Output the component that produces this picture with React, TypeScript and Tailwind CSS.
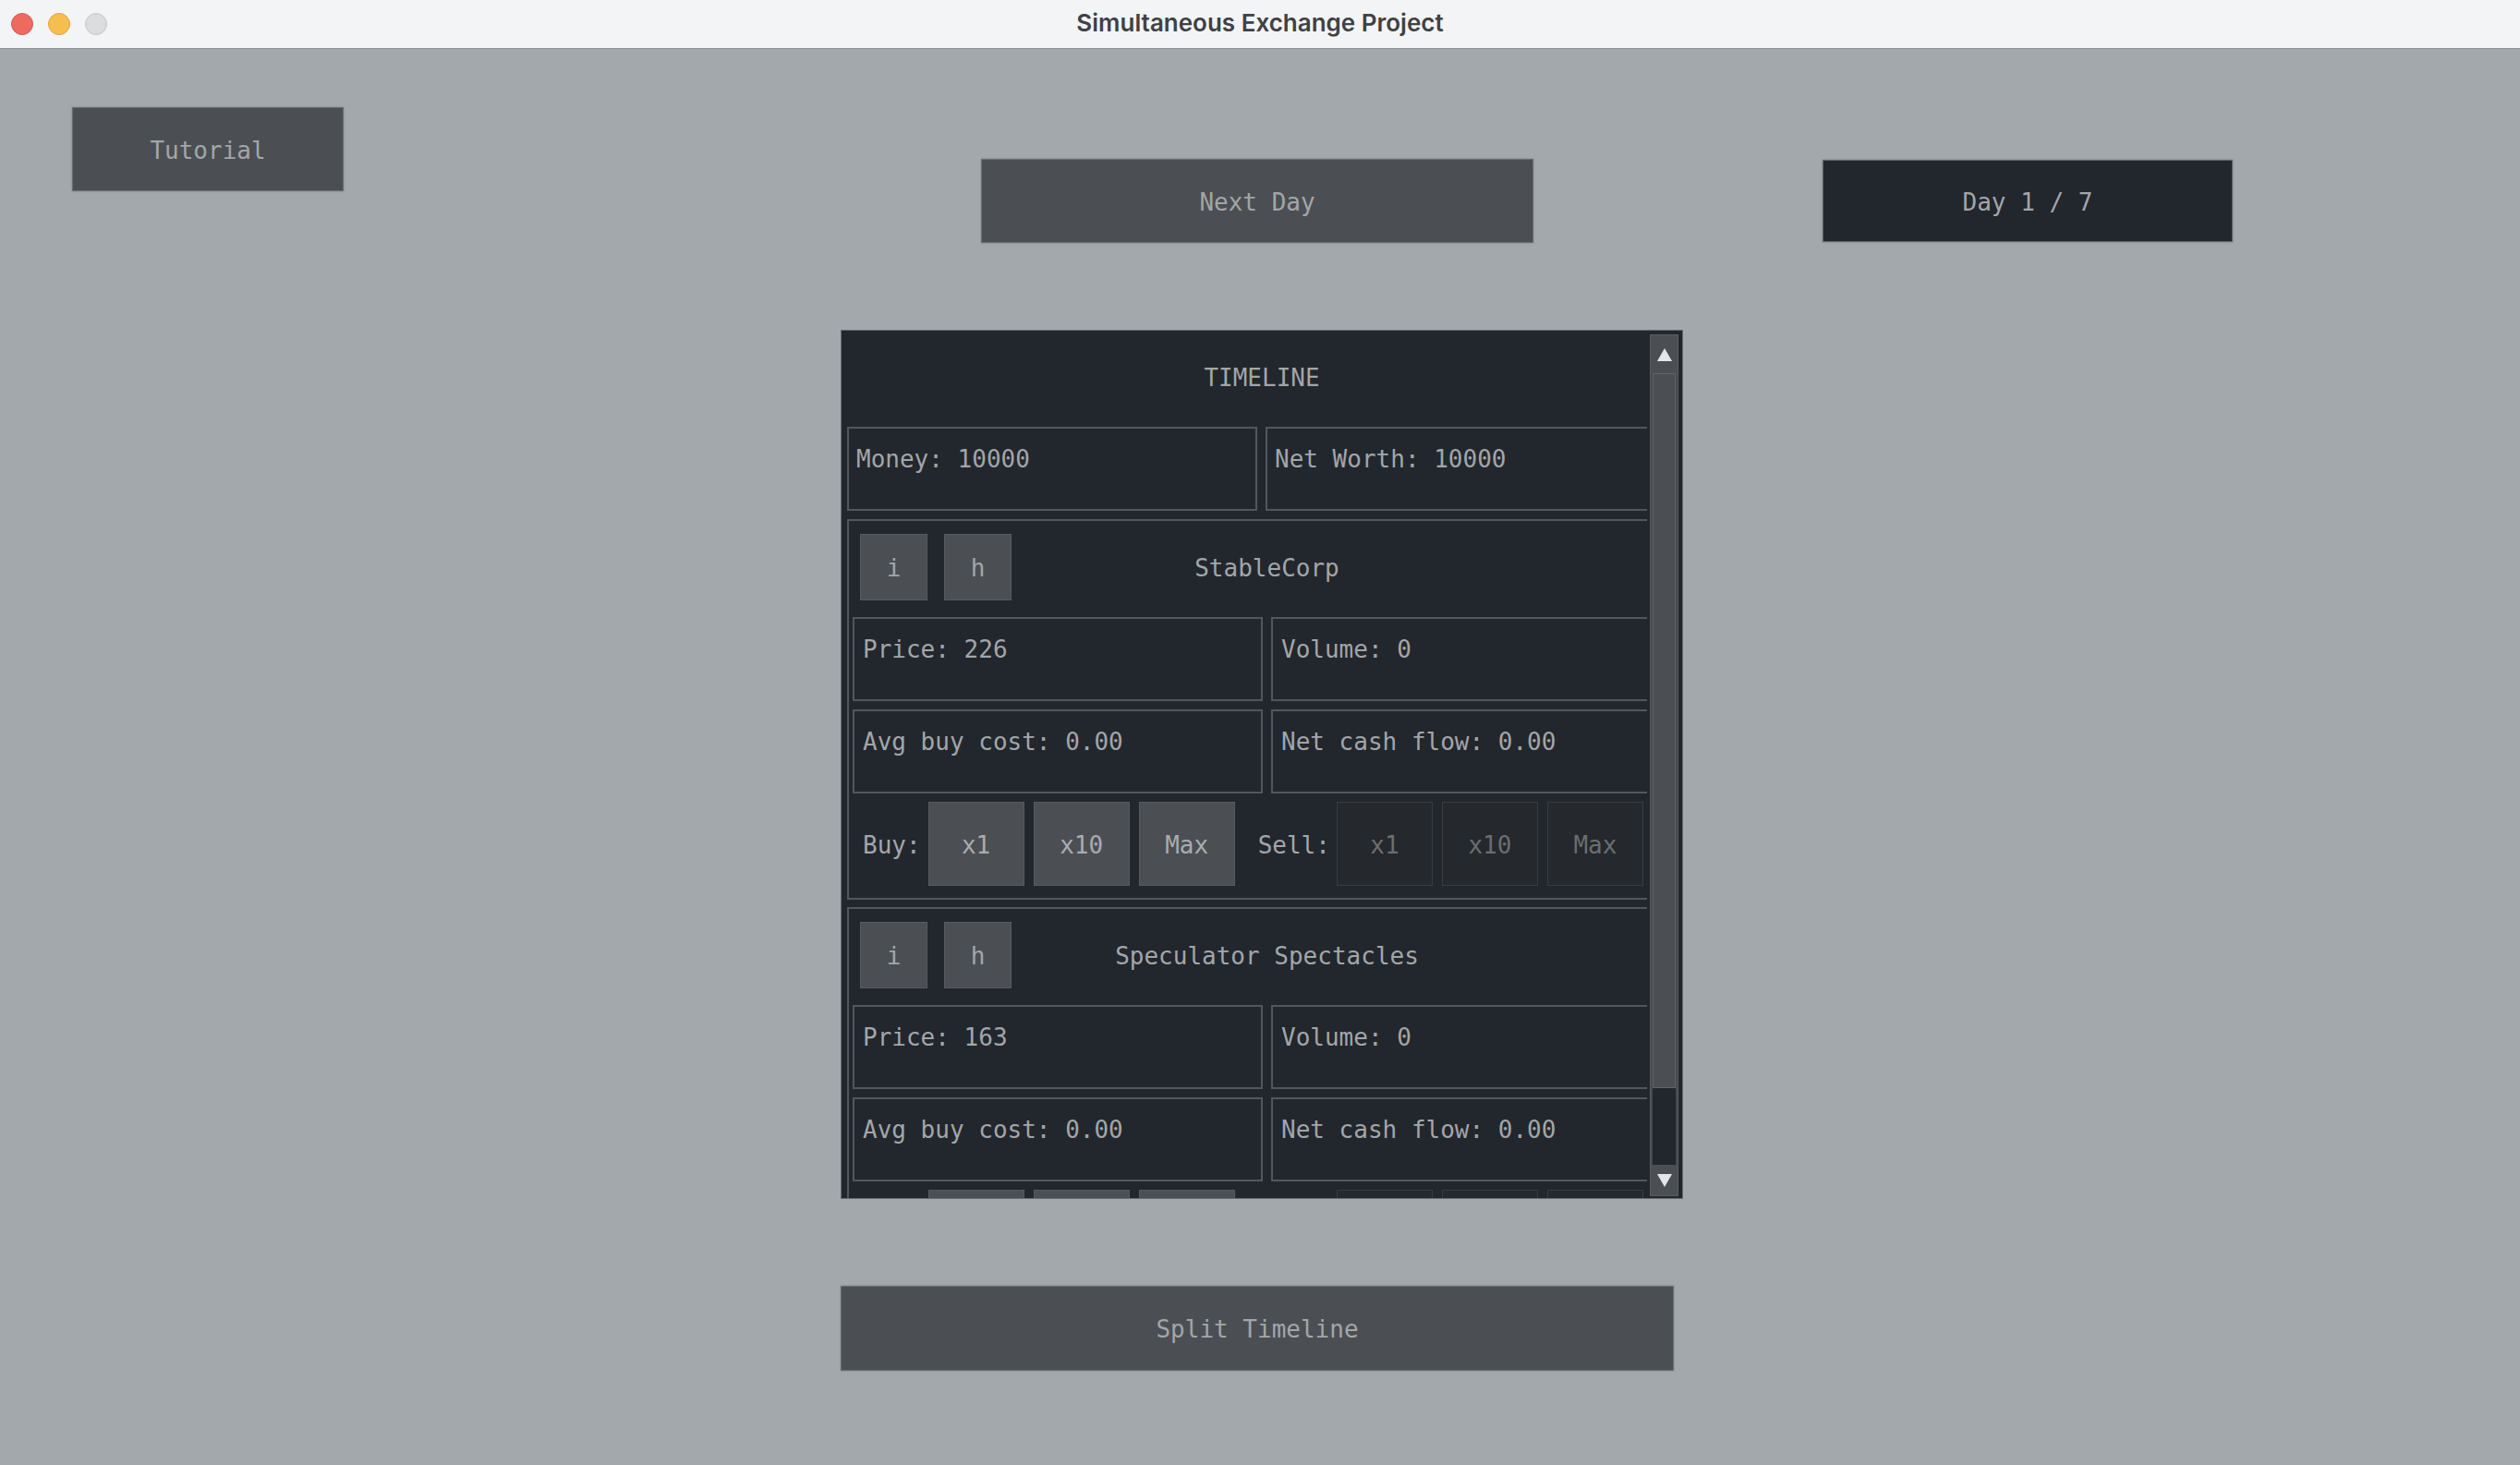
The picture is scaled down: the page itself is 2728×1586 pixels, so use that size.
import React from 'react'

const mono = { fontFamily: '"DejaVu Sans Mono", "Liberation Mono", monospace' }

function StatBox({ label }: { label: string }) {
  return (
    <div className="w-[444px] h-[91px] shrink-0 border-2 border-[#53575b] pl-[9px] pt-[18px] leading-[30px]">
      {label}
    </div>
  )
}

function TradeButton({ label, disabled }: { label: string, disabled?: boolean }) {
  if (disabled) {
    return (
      <div className="w-[104px] h-[91px] shrink-0 flex items-center justify-center pt-[3px] bg-[#25282c] border border-[#383c40] text-[#6b6e71]">
        {label}
      </div>
    )
  }
  return (
    <div className="w-[104px] h-[91px] shrink-0 flex items-center justify-center pt-[3px] bg-[#4b4f53] border border-[#575b5f] text-[#a9acaf]">
      {label}
    </div>
  )
}

function CompanyCard({ name, price }: { name: string, price: number }) {
  return (
    <div className="ml-[6px] w-[909px] shrink-0 border-2 border-[#53575b] pt-[14px] pb-[13px]">
      <div className="grid grid-cols-[1fr_auto_1fr] items-center h-[72px]">
        <div className="flex gap-[18px] pl-[12px]">
          <div className="w-[73px] h-[72px] flex items-center justify-center pt-[2px] bg-[#4b4f53] border border-[#575b5f]">i</div>
          <div className="w-[73px] h-[72px] flex items-center justify-center pt-[2px] bg-[#4b4f53] border border-[#575b5f]">h</div>
        </div>
        <div className="text-center pt-[2px]">{name}</div>
        <div />
      </div>
      <div className="flex flex-col gap-[9px] px-[4px] mt-[18px]">
        <div className="flex gap-[9px]">
          <StatBox label={`Price: ${price}`} />
          <StatBox label="Volume: 0" />
        </div>
        <div className="flex gap-[9px]">
          <StatBox label="Avg buy cost: 0.00" />
          <StatBox label="Net cash flow: 0.00" />
        </div>
      </div>
      <div className="flex items-center h-[91px] mt-[9px] pt-[3px]">
        <span className="ml-[15px] mr-[8px]">Buy:</span>
        <div className="flex gap-[10px] -mt-[3px]">
          <TradeButton label="x1" />
          <TradeButton label="x10" />
          <TradeButton label="Max" />
        </div>
        <span className="ml-[25px] mr-[7px]">Sell:</span>
        <div className="flex gap-[10px] -mt-[3px]">
          <TradeButton label="x1" disabled />
          <TradeButton label="x10" disabled />
          <TradeButton label="Max" disabled />
        </div>
      </div>
    </div>
  )
}

function Arrow({ up }: { up?: boolean }) {
  return (
    <svg width="16" height="14" viewBox="0 0 16 14">
      <polygon points={up ? '8,0 16,14 0,14' : '0,0 16,0 8,14'} fill="#e4e5e6" />
    </svg>
  )
}

function Scrollbar() {
  return (
    <div className="absolute top-[4px] right-[4px] w-[31px] h-[933px] flex flex-col bg-[#45494d] border border-[#5a5e62]">
      <div className="h-[41px] flex items-center justify-center bg-[#4b4f53]">
        <Arrow up />
      </div>
      <div className="flex-1 flex flex-col px-[2px]">
        <div className="h-[774px] bg-[#4b4f53] border border-[#62666a]" />
        <div className="flex-1 bg-[#22272d]" />
      </div>
      <div className="h-[33px] flex items-center justify-center bg-[#4b4f53]">
        <Arrow />
      </div>
    </div>
  )
}

export default function App() {
  return (
    <div className="w-[2728px] h-[1586px] flex flex-col bg-[#a3a8ac] overflow-hidden">
      <div className="h-[53px] shrink-0 grid grid-cols-[1fr_auto_1fr] items-center bg-[#f3f4f6] border-b border-[#8e9296]">
        <div className="flex gap-[16px] pl-[12px]">
          <div className="w-[24px] h-[24px] rounded-full bg-[#ee6a5f] border border-[#d65a50]" />
          <div className="w-[24px] h-[24px] rounded-full bg-[#f6be4f] border border-[#dea63c]" />
          <div className="w-[24px] h-[24px] rounded-full bg-[#dcdcde] border border-[#c4c4c6]" />
        </div>
        <div className="text-[26px] font-semibold text-[#3f4144] -mt-[4px]" style={{ fontFamily: 'Inter, Roboto, sans-serif' }}>
          Simultaneous Exchange Project
        </div>
        <div />
      </div>

      <div className="flex flex-col text-[26px] text-[#a3a6a9]" style={mono}>
        <div className="flex items-start">
          <div className="ml-[78px] mt-[63px] w-[294px] h-[91px] flex items-center justify-center pt-[3px] bg-[#4b4f53] border border-[#6a6e72] shadow-[0_0_2px_rgba(0,0,0,0.25)]">
            Tutorial
          </div>
          <div className="ml-[690px] mt-[119px] w-[598px] h-[91px] flex items-center justify-center pt-[3px] bg-[#4b4f53] border border-[#6a6e72] shadow-[0_0_2px_rgba(0,0,0,0.25)]">
            Next Day
          </div>
          <div className="ml-[313px] mt-[120px] w-[444px] h-[89px] flex items-center justify-center pt-[3px] bg-[#22272d] border border-[#62666a] shadow-[0_0_2px_rgba(0,0,0,0.3)]">
            Day 1 / 7
          </div>
        </div>

        <div className="relative ml-[910px] mt-[94px] w-[912px] h-[941px] bg-[#22272d] border border-[#676b70] overflow-hidden">
          <div className="w-[872px] h-full overflow-hidden">
            <div className="w-[915px] flex flex-col">
              <div className="w-[910px] h-[99px] flex items-center justify-center pt-[3px]">TIMELINE</div>
              <div className="ml-[6px] mt-[5px] flex gap-[9px]">
                <div className="w-[444px] h-[91px] shrink-0 border-2 border-[#53575b] pl-[8px] pt-[18px] leading-[30px]">Money: 10000</div>
                <div className="w-[444px] h-[91px] shrink-0 border-2 border-[#53575b] pl-[8px] pt-[18px] leading-[30px]">Net Worth: 10000</div>
              </div>
              <div className="mt-[9px] flex flex-col gap-[8px]">
                <CompanyCard name="StableCorp" price={226} />
                <CompanyCard name="Speculator Spectacles" price={163} />
              </div>
            </div>
          </div>
          <Scrollbar />
        </div>

        <div className="ml-[910px] mt-[94px] w-[902px] h-[92px] flex items-center justify-center pt-[3px] bg-[#4b4f53] border border-[#6a6e72] shadow-[0_0_2px_rgba(0,0,0,0.25)]">
          Split Timeline
        </div>
      </div>
    </div>
  )
}
